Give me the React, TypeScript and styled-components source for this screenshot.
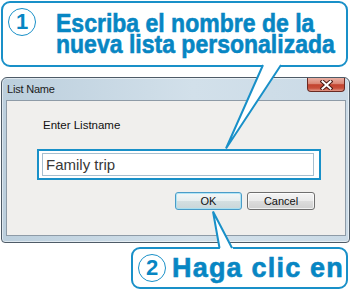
import React from 'react';
import styled, { createGlobalStyle } from 'styled-components';

const TEXT_BLUE = '#0786c3';
const LINE_BLUE = '#1990c8';

const GlobalStyle = createGlobalStyle`
  html, body { margin: 0; padding: 0; background: #ffffff; }
  body {
    width: 351px;
    height: 290px;
    overflow: hidden;
    font-family: "Liberation Sans", Arial, sans-serif;
  }
`;

const Page = styled.div`
  position: relative;
  width: 351px;
  height: 290px;
  display: flex;
  flex-direction: column;
  background: #ffffff;
`;

const Callout = styled.div`
  position: relative;
  z-index: 2;
  box-sizing: border-box;
  border: 2px solid ${LINE_BLUE};
  border-radius: 9px;
  background: #ffffff;
  display: flex;
`;

const TopCallout = styled(Callout)`
  margin: 1px 3px 0 1px;
  height: 66px;
  padding: 5px;
  align-items: flex-start;
  gap: 20px;
`;

const BottomCallout = styled(Callout)`
  align-self: flex-end;
  margin: 4px 3px 0 0;
  width: 217px;
  height: 42px;
  padding: 0 5px;
  align-items: center;
  gap: 6px;
`;

const StepNumber = styled.span`
  flex: none;
  box-sizing: border-box;
  width: 28px;
  height: 28px;
  border: 1.5px solid ${LINE_BLUE};
  border-radius: 50%;
  display: flex;
  align-items: center;
  justify-content: center;
  color: ${TEXT_BLUE};
  font-family: "Liberation Sans", Arial, sans-serif;
  font-weight: 700;
  font-size: 22px;
  line-height: 1;
`;

const Headline = styled.div`
  margin-top: 5px;
  color: ${TEXT_BLUE};
  font-family: "Liberation Sans", Arial, sans-serif;
  font-weight: 700;
  font-size: 26px;
  line-height: 21px;
  white-space: nowrap;
  -webkit-text-stroke: 0.6px ${TEXT_BLUE};
  transform: scaleX(0.885);
  transform-origin: left top;
`;

const HeadlineLine = styled.div``;

const ActionText = styled.span`
  color: ${TEXT_BLUE};
  font-family: "Liberation Sans", Arial, sans-serif;
  font-weight: 700;
  font-size: 27px;
  line-height: 27px;
  letter-spacing: 1.2px;
  white-space: nowrap;
  -webkit-text-stroke: 0.6px ${TEXT_BLUE};
`;

const Tail = styled.svg`
  position: absolute;
  z-index: 3;
  overflow: visible;
`;

const Window = styled.div`
  box-sizing: border-box;
  margin: 10px 0 0 1px;
  width: 349px;
  height: 166px;
  border: 1px solid #4e5b67;
  border-radius: 6px 6px 4px 4px;
  background: linear-gradient(90deg, #bccfdd 0%, #d2e0ea 55%, #cadae6 100%);
  box-shadow: inset 0 0 0 1px rgba(255, 255, 255, 0.5);
  display: flex;
  flex-direction: column;
  padding: 0 3px 6px 4px;
`;

const TitleBar = styled.div`
  height: 22px;
  flex: none;
  display: flex;
  align-items: flex-start;
  justify-content: space-between;
`;

const Title = styled.span`
  margin: 5px 0 0 1px;
  font-family: "Liberation Sans", Arial, sans-serif;
  font-size: 11px;
  line-height: 13px;
  letter-spacing: -0.2px;
  color: #1b1b1b;
`;

const CloseButton = styled.div`
  box-sizing: border-box;
  width: 38px;
  height: 14px;
  margin-right: 1px;
  border: 1px solid #6a2a22;
  border-top: none;
  border-radius: 0 0 4px 4px;
  background: linear-gradient(180deg, #eab0a4 0%, #dc8a79 42%, #c3432f 52%, #c84f3b 78%, #e29888 100%);
  display: flex;
  align-items: center;
  justify-content: center;
`;

const Client = styled.div`
  flex: 1;
  border: 1px solid #8e9ba7;
  background: #f0efed;
  display: flex;
  flex-direction: column;
  padding: 0 30px;
`;

const Label = styled.div`
  margin: 17px 0 0 6px;
  font-family: "Liberation Sans", Arial, sans-serif;
  font-size: 11.5px;
  line-height: 14px;
  color: #111111;
`;

const Highlight = styled.div`
  box-sizing: border-box;
  margin-top: 17px;
  width: 284px;
  height: 31px;
  border: 2px solid ${LINE_BLUE};
  background: #ffffff;
  padding: 2px 5px 2px 3px;
  display: flex;
`;

const TextField = styled.div`
  flex: 1;
  box-sizing: border-box;
  border: 1px solid #a7bfcf;
  background: #ffffff;
  padding-left: 3px;
  display: flex;
  align-items: center;
  font-family: "Liberation Sans", Arial, sans-serif;
  font-size: 15px;
  color: #383838;
`;

const ButtonRow = styled.div`
  margin-top: 12px;
  display: flex;
  justify-content: flex-end;
  gap: 5px;
`;

const Button = styled.div<{ $default?: boolean; $width: number }>`
  box-sizing: border-box;
  width: ${(p) => p.$width}px;
  height: 18px;
  border: 1px solid ${(p) => (p.$default ? '#4a9cc8' : '#6f6f6f')};
  border-radius: 3px;
  background: ${(p) =>
    p.$default
      ? 'linear-gradient(180deg, #f3f7f8 0%, #e6eeef 48%, #d3dfe1 52%, #c9d6d9 100%)'
      : 'linear-gradient(180deg, #f4f4f4 0%, #ebebeb 48%, #dcdcdc 52%, #d0d0d0 100%)'};
  box-shadow: inset 0 0 0 1px ${(p) => (p.$default ? 'rgba(160, 225, 245, 0.8)' : 'rgba(255, 255, 255, 0.7)')};
  display: flex;
  align-items: center;
  justify-content: center;
  font-family: "Liberation Sans", Arial, sans-serif;
  font-size: 11px;
  color: #111111;
`;

export default function App() {
  return (
    <>
      <GlobalStyle />
      <Page>
        <TopCallout>
          <StepNumber>1</StepNumber>
          <Headline>
            <HeadlineLine>Escriba el nombre de la</HeadlineLine>
            <HeadlineLine>nueva lista personalizada</HeadlineLine>
          </Headline>
        </TopCallout>

        <Window>
          <TitleBar>
            <Title>List Name</Title>
            <CloseButton>
              <svg width="13" height="10" viewBox="0 0 13 10">
                <path d="M2.5 1.5 L10.5 8.5 M10.5 1.5 L2.5 8.5" stroke="#4a1a14" strokeWidth="4" strokeLinecap="square" />
                <path d="M2.5 1.5 L10.5 8.5 M10.5 1.5 L2.5 8.5" stroke="#ffffff" strokeWidth="2" strokeLinecap="square" />
              </svg>
            </CloseButton>
          </TitleBar>
          <Client>
            <Label>Enter Listname</Label>
            <Highlight>
              <TextField>Family trip</TextField>
            </Highlight>
            <ButtonRow>
              <Button $default $width={67}>OK</Button>
              <Button $width={68}>Cancel</Button>
            </ButtonRow>
          </Client>
        </Window>

        <BottomCallout>
          <StepNumber>2</StepNumber>
          <ActionText>Haga clic en</ActionText>
        </BottomCallout>

        <Tail width="70" height="90" style={{ left: 220, top: 62 }} viewBox="0 0 70 90">
          <polygon points="44.3,0 63,0 6,86.5" fill="#ffffff" />
          <path d="M43 3 L6 86.5 L61 3" fill="none" stroke={LINE_BLUE} strokeWidth="2" strokeLinejoin="miter" />
        </Tail>
        <Tail width="35" height="44" style={{ left: 205, top: 208 }} viewBox="0 0 35 44">
          <polygon points="8,3.5 15.2,42 28.8,42" fill="#ffffff" />
          <path d="M14.5 40 L8 3.5 L27 40" fill="none" stroke={LINE_BLUE} strokeWidth="2" strokeLinejoin="miter" />
        </Tail>
      </Page>
    </>
  );
}
